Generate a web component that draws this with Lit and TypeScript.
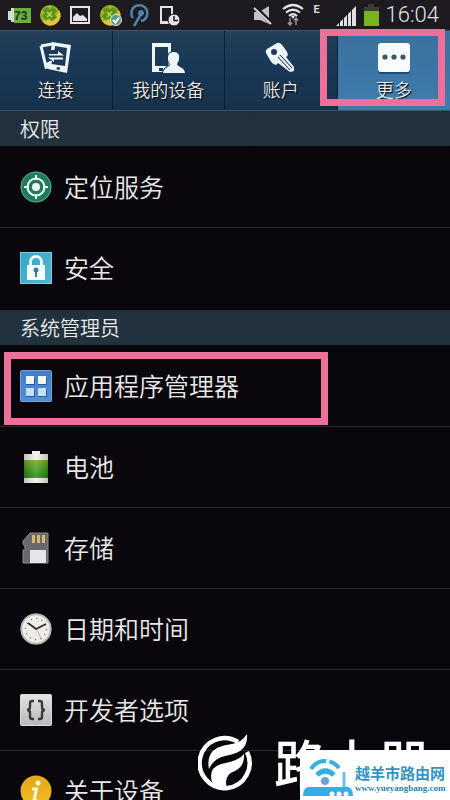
import { LitElement, html, svg, css } from "lit";
import { customElement } from "lit/decorators.js";
import { classMap } from "lit/directives/class-map.js";

const tabIcons = {
  connect: svg`
    <path d="M3 5 L14 3 M3 5 L8 26 L11 25" fill="none" stroke="#eef6fa" stroke-width="3"/>
    <path d="M7 22 L11 21 V27 L8 28 Z" fill="#eef6fa"/>
    <path fill-rule="evenodd" d="M14 1 L33 4 L29 32 L10 28 L11 20 L14 20 L13.500 23 L27 25 L29 7 L17 5 L16.500 9 L13 9 Z" fill="#eef6fa"/>
    <path d="M11 13 H20 V10 L26 14.500 H11 Z" fill="#eef6fa"/>
    <path d="M25 16.500 H10 L16 21 V18.500 H25 Z" fill="#eef6fa"/>
    <path d="M19 26 L22 26.500 L21.500 29 L18.500 28.500 Z" fill="#1c3954"/>`,
  device: svg`
    <path fill-rule="evenodd" d="M2 2 H21 V31 H2 Z M5 6 V25 H18 V6 Z" fill="#eef6fa"/>
    <rect x="9" y="27" width="4" height="3" fill="#1c3954"/>
    <path d="M24 11 C28 11 30 14 29 18 C29 20 28 21 27 23 C28 27 34 25 35 32 H13 C14 26 19 27 20 23 C18 21 18 19 18 17 C18 13 20 11 24 11 Z" fill="#eef6fa" stroke="#1b3852" stroke-width="2" paint-order="stroke"/>`,
  account: svg`
    <path fill-rule="evenodd" d="M4 8 L14 2 Q17 1 20 5 L24 11 Q26 15 23 16 L31 26 L31 30 L27 31 L15 22 L13 24 Q9 23 7 19 L3 12 Q2 10 4 8 Z M11 8 A3 3 0 1 0 11 14 A3 3 0 1 0 11 8 Z" fill="#eef6fa"/>
    <path d="M16 15 L28 28" stroke="#1b3852" stroke-width="4"/><path d="M16 15 L28 28" stroke="#eef6fa" stroke-width="2"/>`,
  more: svg`
    <rect x="2" y="3" width="32" height="30" rx="3" fill="#1d4c74"/>
    <rect x="2" y="2" width="32" height="29" rx="3" fill="#f8fcfd"/>
    <g fill="#3f5564"><circle cx="9" cy="16" r="2.600"/><circle cx="18" cy="16" r="2.600"/><circle cx="27" cy="16" r="2.600"/></g>`,
};

const rowIcons = {
  location: svg`
    <circle cx="16" cy="16" r="15.5" fill="#217a5b"/><circle cx="16" cy="16" r="15" fill="none" stroke="#57a98b"/>
    <g stroke="#edfaf2" stroke-width="2" fill="none"><circle cx="16" cy="16" r="8.5"/><path d="M16 4 V9 M16 23 V28 M4 16 H9 M23 16 H28"/></g>
    <circle cx="16" cy="16" r="4" fill="#edfaf2"/>`,
  lock: svg`
    <defs><linearGradient id="lk" x2="1" y2="1"><stop stop-color="#2fa9c4"/><stop offset="1" stop-color="#58b5d6"/></linearGradient></defs>
    <rect x="0.5" y="0.5" width="31" height="31" fill="url(#lk)" stroke="#7fcbe0"/>
    <path d="M10.500 14 V10 A5.500 5.500 0 0 1 21.500 10 V14" fill="none" stroke="#f3fbfd" stroke-width="3"/>
    <rect x="7" y="13" width="18" height="15" fill="#f3fbfd"/>
    <circle cx="16" cy="18" r="2.500" fill="#3c7d91"/><rect x="15" y="19" width="2" height="6" fill="#3c7d91"/>`,
  apps: svg`
    <defs><linearGradient id="ap" x2="0" y2="1"><stop stop-color="#3e7fc6"/><stop offset="1" stop-color="#5090d4"/></linearGradient></defs>
    <rect x="0.5" y="0.5" width="31" height="31" rx="1" fill="url(#ap)" stroke="#6ea6dc"/>
    <g fill="#2b5f9c"><rect x="6" y="8" width="9" height="7"/><rect x="18" y="8" width="9" height="7"/><rect x="6" y="20" width="9" height="7"/><rect x="18" y="20" width="9" height="7"/></g>
    <g fill="#eef6fc"><rect x="6" y="6" width="8" height="8"/><rect x="18" y="6" width="8" height="8"/></g>
    <g fill="#c9e0f4"><rect x="6" y="18" width="8" height="8"/><rect x="18" y="18" width="8" height="8"/></g>`,
  battery: svg`
    <defs><linearGradient id="bt" x2="0" y2="1"><stop stop-color="#7fa820"/><stop offset=".6" stop-color="#2f9a12"/><stop offset="1" stop-color="#2c8418"/></linearGradient>
    <linearGradient id="bs"><stop stop-color="#000" stop-opacity=".2"/><stop offset=".5" stop-color="#fff" stop-opacity=".15"/><stop offset="1" stop-color="#000" stop-opacity=".2"/></linearGradient></defs>
    <path d="M12 0 H20 V3 H28 V32 H4 V3 H12 Z" fill="#eff2ea"/>
    <rect x="4" y="9" width="24" height="18" fill="url(#bt)"/><rect x="4" y="3" width="24" height="29" fill="url(#bs)"/>`,
  storage: svg`
    <path d="M10 1 H28 V31 H3 V18 H5 V15 L3 12 V9 Z" fill="#69696b" stroke="#8b8b8c"/>
    <g fill="#d8b86a"><rect x="12" y="3" width="3" height="8"/><rect x="17" y="3" width="3" height="8"/><rect x="22" y="3" width="3" height="8"/></g>
    <rect x="10" y="18" width="16" height="13" fill="#e4e6ec"/>`,
  clock: svg`
    <circle cx="16" cy="16" r="15.500" fill="#eeece8"/><circle cx="16" cy="16" r="14.500" fill="none" stroke="#b9b7b5" stroke-width="1.500"/>
    <circle cx="16" cy="16" r="10.500" fill="none" stroke="#77736f" stroke-width="1.500" stroke-dasharray="1 4.498"/>
    <path d="M16 16 L22 27" stroke="#dba887"/><path d="M8 10 L16 16 L26 11" fill="none" stroke="#2d2a2c" stroke-width="1.800"/>`,
  braces: svg`
    <defs><linearGradient id="br" x2="0" y2="1"><stop stop-color="#e3e3e4"/><stop offset="1" stop-color="#b9b9bc"/></linearGradient></defs>
    <rect x="0.5" y="0.5" width="31" height="31" rx="1" fill="url(#br)" stroke="#dcdcde"/>
    <g fill="none" stroke="#3a3a3d" stroke-width="2.400"><path d="M14 7 H12.500 Q10 7 10 9 V13 Q10 16 7 16 Q10 16 10 19 V23 Q10 25 12.500 25 H14"/><path d="M18 7 H19.500 Q22 7 22 9 V13 Q22 16 25 16 Q22 16 22 19 V23 Q22 25 19.500 25 H18"/></g>`,
  info: svg`
    <defs><linearGradient id="nf" x2="0" y2="1"><stop stop-color="#e6a51c"/><stop offset="1" stop-color="#f0bd22"/></linearGradient></defs>
    <circle cx="16" cy="16" r="15.500" fill="url(#nf)"/>
    <circle cx="18" cy="8" r="2.500" fill="#fdf6dc"/><path d="M12 14 H16.500 L14 25 H17" fill="none" stroke="#fdf6dc" stroke-width="3"/>`,
};

type Tab = { label: string; icon: keyof typeof tabIcons; active?: boolean };
type Row = { label: string; icon: keyof typeof rowIcons; marked?: boolean };

const tabs: Tab[] = [
  { label: "连接", icon: "connect" },
  { label: "我的设备", icon: "device" },
  { label: "账户", icon: "account" },
  { label: "更多", icon: "more", active: true },
];

const sections: { title: string; rows: Row[] }[] = [
  {
    title: "权限",
    rows: [
      { label: "定位服务", icon: "location" },
      { label: "安全", icon: "lock" },
    ],
  },
  {
    title: "系统管理员",
    rows: [
      { label: "应用程序管理器", icon: "apps", marked: true },
      { label: "电池", icon: "battery" },
      { label: "存储", icon: "storage" },
      { label: "日期和时间", icon: "clock" },
      { label: "开发者选项", icon: "braces" },
      { label: "关于设备", icon: "info" },
    ],
  },
];

@customElement("status-bar")
class StatusBar extends LitElement {
  static styles = css`
    :host { display: flex; justify-content: space-between; align-items: center; height: 30px; padding: 0 11px 0 8px; background: #1d1a20; color: #dcdce0; font-family: Roboto, sans-serif; }
    .group { display: flex; align-items: center; gap: 6px; }
    svg { display: block; flex: none; }
    .net { width: 16px; padding-left: 4px; font-size: 11px; line-height: 20px; height: 30px; font-weight: 700; }
    .time { font-size: 22px; line-height: 30px; color: #e2e2e5; }
    .pct { font: 700 12px "Liberation Sans", sans-serif; }
  `;

  ball() {
    return svg`<circle cx="12" cy="12" r="10" fill="#a5b51c"/><path d="M4 18 A10 10 0 0 0 21 7 Q18 18 4 18" fill="#e3c43a"/>
      <path d="M9 5 L12 8 L15 5 L18 8 L15 11 L18 14 L14 17 L11 14 L8 16 L5 13 L8 10 L6 7 Z" fill="#57951f" stroke="#57951f" stroke-width="2" stroke-linejoin="round"/><path d="M9 9 L14 14 M14 8.500 L9 14" stroke="#c6d048" stroke-width="1.500"/>`;
  }

  render() {
    return html`
      <div class="group">
        <svg width="24" height="24" viewBox="0 0 24 24"><path d="M3 5 H8 V19 H3 V17 H0 V8 H3 Z" fill="#d3dcd0"/><rect x="6" y="5" width="17" height="15" fill="#69ae3f"/><text class="pct" x="6" y="17" fill="#17361b">73</text></svg>
        <svg width="24" height="24" viewBox="0 0 24 24">${this.ball()}</svg>
        <svg width="24" height="24" viewBox="0 0 24 24"><rect x="3" y="4" width="18" height="16" fill="none" stroke="#e4e4e6" stroke-width="2"/><path d="M5 18 V14 L9 10 L12 13 L15 12 L19 16 V18 Z" fill="#e4e4e6"/></svg>
        <svg width="24" height="24" viewBox="0 0 24 24">${this.ball()}<circle cx="18" cy="17" r="5.500" fill="#5a9c83" stroke="#dbe6dc"/><path d="M15 17 L17.500 19.500 L21 14.500" fill="none" stroke="#fff" stroke-width="2"/></svg>
        <svg width="24" height="24" viewBox="0 0 24 24" fill="none" stroke="#4d85ad"><path d="M5 15 A8 8 0 1 1 13 18" stroke-width="2.500"/><path d="M6 23 L13 11" stroke-width="2.500"/><circle cx="13" cy="10" r="2.500" fill="#4d85ad"/></svg>
        <svg width="24" height="24" viewBox="0 0 24 24"><path fill-rule="evenodd" d="M2 3 H15 V11 H13 V5 H4 V18 H12 V21 H2 Z" fill="#e4e4e6"/><circle cx="16" cy="17" r="6" fill="#e4e4e6" stroke="#1d1a20"/><path d="M16 13 V17.500 H20" fill="none" stroke="#1d1a20" stroke-width="1.500"/></svg>
      </div>
      <div class="group">
        <svg width="24" height="24" viewBox="0 0 24 24"><path d="M2 9 H7 L17 3 V21 L8 17 H2 Z" fill="#c3c3c7"/><path d="M2 3 L20 21" stroke="#1d1a20" stroke-width="4"/><path d="M2 5 L19 21" stroke="#d5d5d8" stroke-width="2"/></svg>
        <svg width="22" height="24" viewBox="0 0 22 24"><g fill="none" stroke="#e2e2e4" stroke-width="2.200"><path d="M1 6 Q11 -2 21 6"/><path d="M4 9.500 Q11 4 18 9.500"/><path d="M7 13 Q11 9.500 15 13"/></g><path d="M9 13 H13 L11 16 Z" fill="#e2e2e4"/><path d="M8 15 V22 M6 19.500 L8 22 L10 19.500 M14 22 V15 M12 17.500 L14 15 L16 17.500" fill="none" stroke="#98989c" stroke-width="1.500"/></svg>
        <span class="net">E</span>
        <svg width="20" height="24" viewBox="0 0 20 24" fill="#e0e0e2"><path d="M0 23 L3 20 V23 Z M4 19 L7 16 V23 H4 Z M8 15 L11 12 V23 H8 Z M12 11 L15 8 V23 H12 Z M16 7 L20 3 V23 H16 Z"/></svg>
        <svg width="18" height="24" viewBox="0 0 18 24"><path d="M6 1 H12 V4 H17 V8 H2 V4 H6 Z" fill="#3c3c3c"/><rect x="2" y="8" width="15" height="15" fill="#78b51d"/></svg>
        <span class="time">16:04</span>
      </div>
    `;
  }
}

@customElement("site-mark")
class SiteMark extends LitElement {
  static styles = css`
    :host { display: block; position: relative; width: 252px; height: 68px; font-family: "Noto Sans CJK SC", sans-serif; }
    .brand { display: flex; align-items: center; gap: 20px; color: #fff; }
    .name { font-size: 52px; line-height: 60px; font-weight: 500; white-space: nowrap; }
    svg { display: block; flex: none; }
    .card { position: absolute; right: 0; bottom: 0; display: flex; gap: 2px; width: 147px; height: 50px; padding-left: 3px; background: #fff; }
    .text { display: flex; flex-direction: column; padding-top: 14px; color: #3294c4; }
    .site { font-size: 15px; line-height: 18px; font-weight: 700; white-space: nowrap; }
    .url { font: 700 9px/13px "Liberation Serif", serif; color: #2b7fa8; text-decoration: none; }
  `;

  render() {
    return html`
      <div class="brand">
        <svg width="56" height="60" viewBox="0 0 56 60">
          <path d="M40 10 A25 25 0 1 0 49 20" fill="none" stroke="#fff" stroke-width="4.500"/>
          <path d="M49 2 Q50 14 42 19 Q37 22 27 24 Q15 27 11 37 Q8 22 19 16 Q25 13 34 12 Q44 10 49 2 Z" fill="#fff"/>
          <path d="M46 22 Q47 34 37 39 Q25 43 29 56 Q20 57 14 50 Q10 36 23 32 Q41 29 46 22 Z" fill="#fff"/>
        </svg>
        <span class="name">路由器</span>
      </div>
      <div class="card">
        <svg width="50" height="50" viewBox="0 0 50 50">
          <g fill="none" stroke="#35aee0"><path d="M8 19 Q13 11 22 11 Q31 11 36 18" stroke-width="4" stroke-dasharray="18 3"/><path d="M14 25 Q22 17 31 25" stroke-width="5"/></g>
          <circle cx="22" cy="31" r="4" fill="#6c9fe0"/>
          <path d="M41 22 V38" stroke="#6cc2e6" stroke-width="3"/>
          <path d="M5 37 H45 Q50 38 50 46 H0 Q0 38 5 37 Z" fill="#35aee8"/>
          <g fill="#fff"><circle cx="29" cy="44" r="2.500"/><circle cx="36" cy="44" r="2.500"/><circle cx="43" cy="44" r="2.500"/></g>
        </svg>
        <div class="text"><span class="site">越羊市路由网</span><a class="url" href="#">www.yueyangbang.com</a></div>
      </div>
    `;
  }
}

@customElement("app-root")
class AppRoot extends LitElement {
  static styles = css`
    :host { display: block; position: relative; height: 100vh; overflow: hidden; background: #09070b; color: #e9e9ec; font-family: "Noto Sans CJK SC", sans-serif; font-weight: 350; }
    button { margin: 0; border: 0; padding: 0; background: none; color: inherit; font: inherit; cursor: pointer; }
    svg { display: block; flex: none; }
    .tabs { display: grid; grid-template-columns: repeat(4, 1fr); height: 79px; border-top: 1px solid #36566f; border-bottom: 1px solid #39546a; background: linear-gradient(#243f58, #183957 40%, #17314b); }
    .tab { position: relative; display: flex; flex-direction: column; align-items: center; gap: 2px; padding-top: 10px; border-right: 1px solid #0d2033; font-size: 18px; line-height: 24px; text-shadow: 1px 1px 1px #000; }
    .tab.active { background: linear-gradient(#3a709d, #3f7cae); border-right: 0; }
    .frame { position: absolute; border: 7px solid #ed709b; pointer-events: none; z-index: 1; }
    .tab .frame { inset: -2px 5px 4px -18px; }
    .row .frame { left: 4px; top: 6px; bottom: 1px; width: 72%; box-sizing: border-box; }
    .title { margin: 0; padding-left: 20px; font-size: 20px; line-height: 35px; font-weight: 350; background: linear-gradient(#22303c, #21323f); }
    .list { margin: 0; padding: 1px 0; list-style: none; }
    .item { border-bottom: 1px solid #2c2a2f; }
    .item:last-child { border-bottom-color: transparent; }
    .row { position: relative; display: flex; align-items: center; gap: 12px; width: 100%; height: 80px; padding-left: 20px; font-size: 25px; line-height: 36px; text-align: left; }
    .label { padding-bottom: 2px; }
    .mark { position: absolute; right: 0; bottom: 0; z-index: 2; }
  `;

  render() {
    return html`
      <status-bar></status-bar>
      <nav class="tabs">
        ${tabs.map(
          (t) => html`<button class=${classMap({ tab: true, active: !!t.active })}>
            <svg width="36" height="34" viewBox="0 0 36 34">${tabIcons[t.icon]}</svg>
            <span>${t.label}</span>
            ${t.active ? html`<span class="frame"></span>` : ""}
          </button>`
        )}
      </nav>
      <main>
        ${sections.map(
          (s) => html`<section>
            <h2 class="title">${s.title}</h2>
            <ul class="list">
              ${s.rows.map(
                (r) => html`<li class="item"><button class="row">
                  <svg width="32" height="32" viewBox="0 0 32 32">${rowIcons[r.icon]}</svg>
                  <span class="label">${r.label}</span>
                  ${r.marked ? html`<span class="frame"></span>` : ""}
                </button></li>`
              )}
            </ul>
          </section>`
        )}
      </main>
      <site-mark class="mark"></site-mark>
    `;
  }
}
